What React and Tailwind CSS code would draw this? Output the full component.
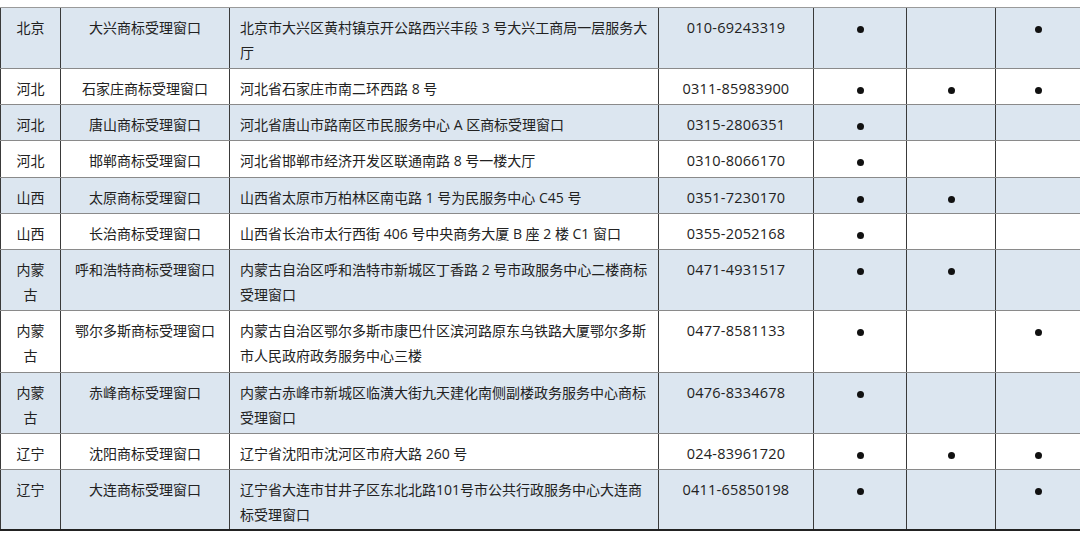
import React from 'react';

const rows = [
  { h: 'h-[61px]', bg: 'bg-[#dce6f0]', prov: ['北京'], name: '大兴商标受理窗口', addr: ['北京市大兴区黄村镇京开公路西兴丰段 3 号大兴工商局一层服务大', '厅'], tel: '010-69243319', a: true, b: false, c: true },
  { h: 'h-[36px]', bg: 'bg-white', prov: ['河北'], name: '石家庄商标受理窗口', addr: ['河北省石家庄市南二环西路 8 号'], tel: '0311-85983900', a: true, b: true, c: true },
  { h: 'h-[36px]', bg: 'bg-[#dce6f0]', prov: ['河北'], name: '唐山商标受理窗口', addr: ['河北省唐山市路南区市民服务中心 A 区商标受理窗口'], tel: '0315-2806351', a: true, b: false, c: false },
  { h: 'h-[37px]', bg: 'bg-white', prov: ['河北'], name: '邯郸商标受理窗口', addr: ['河北省邯郸市经济开发区联通南路 8 号一楼大厅'], tel: '0310-8066170', a: true, b: false, c: false },
  { h: 'h-[36px]', bg: 'bg-[#dce6f0]', prov: ['山西'], name: '太原商标受理窗口', addr: ['山西省太原市万柏林区南屯路 1 号为民服务中心 C45 号'], tel: '0351-7230170', a: true, b: true, c: false },
  { h: 'h-[36px]', bg: 'bg-white', prov: ['山西'], name: '长治商标受理窗口', addr: ['山西省长治市太行西街 406 号中央商务大厦 B 座 2 楼 C1 窗口'], tel: '0355-2052168', a: true, b: false, c: false },
  { h: 'h-[61px]', bg: 'bg-[#dce6f0]', prov: ['内蒙', '古'], name: '呼和浩特商标受理窗口', addr: ['内蒙古自治区呼和浩特市新城区丁香路 2 号市政服务中心二楼商标', '受理窗口'], tel: '0471-4931517', a: true, b: true, c: false },
  { h: 'h-[62px]', bg: 'bg-white', prov: ['内蒙', '古'], name: '鄂尔多斯商标受理窗口', addr: ['内蒙古自治区鄂尔多斯市康巴什区滨河路原东乌铁路大厦鄂尔多斯', '市人民政府政务服务中心三楼'], tel: '0477-8581133', a: true, b: false, c: true },
  { h: 'h-[61px]', bg: 'bg-[#dce6f0]', prov: ['内蒙', '古'], name: '赤峰商标受理窗口', addr: ['内蒙古赤峰市新城区临潢大街九天建化南侧副楼政务服务中心商标', '受理窗口'], tel: '0476-8334678', a: true, b: false, c: false },
  { h: 'h-[36px]', bg: 'bg-white', prov: ['辽宁'], name: '沈阳商标受理窗口', addr: ['辽宁省沈阳市沈河区市府大路 260 号'], tel: '024-83961720', a: true, b: true, c: true },
  { h: 'h-[61px]', bg: 'bg-[#dce6f0]', prov: ['辽宁'], name: '大连商标受理窗口', addr: ['辽宁省大连市甘井子区东北北路101号市公共行政服务中心大连商', '标受理窗口'], tel: '0411-65850198', a: true, b: false, c: true },
];

const Dot = ({ on }) =>
  on ? <span className="inline-block w-[7px] h-[7px] rounded-full bg-[#111] align-middle" /> : null;

const cell = "border-l border-[#3a3a3a] pt-[7px] px-[10px] leading-[25px]";

const App = () => {
  return (
    <div className="w-[1080px] h-[537px] bg-white overflow-hidden text-[14px] text-[#222]" style={{ fontFamily: '"Open Sans", "Noto Sans CJK SC", sans-serif' }}>
      <div className="mt-[7px] border-t border-[#9a9a9a]">
        {rows.map((r, i) => (
          <div
            key={i}
            className={`grid grid-cols-[60px_169px_429px_155px_93px_89px_85px] ${r.h} ${r.bg} ${i === rows.length - 1 ? 'border-b-2 border-[#222]' : 'border-b border-[#8a8a8a]'}`}
          >
            <div className={`${cell} px-0 text-center`}>
              {r.prov.map((p, k) => <div key={k}>{p}</div>)}
            </div>
            <div className={`${cell} px-0 text-center whitespace-nowrap`}>{r.name}</div>
            <div className={`${cell} whitespace-nowrap`}>
              {r.addr.map((l, k) => <div key={k}>{l}</div>)}
            </div>
            <div className={`${cell} px-0 text-center text-[14.5px] tracking-[0.2px]`}>{r.tel}</div>
            <div className={`${cell} px-0 text-center`}><Dot on={r.a} /></div>
            <div className={`${cell} px-0 text-center`}><Dot on={r.b} /></div>
            <div className={`${cell} px-0 text-center`}><Dot on={r.c} /></div>
          </div>
        ))}
      </div>
    </div>
  );
};

export default App;
